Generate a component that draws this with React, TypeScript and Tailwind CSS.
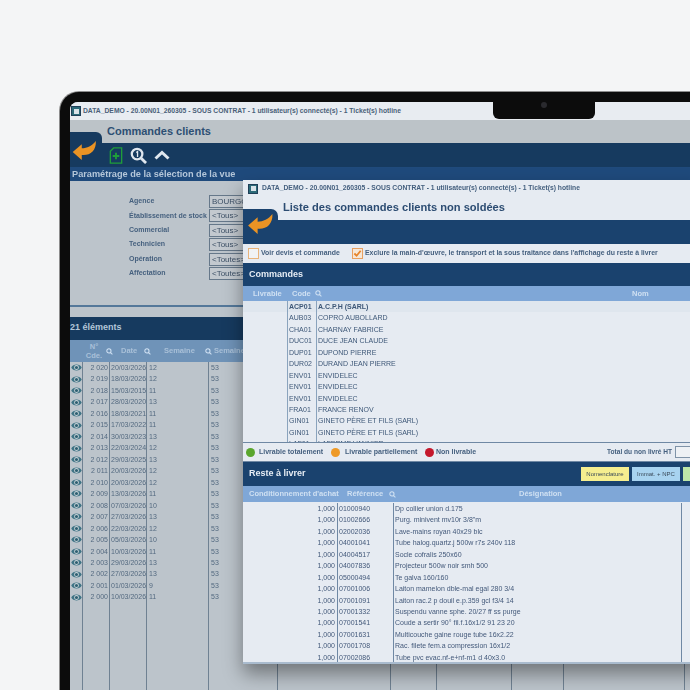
import React from "react";

const orders: [string, string, string][] = [
  ["2 020", "20/03/2026", "12"], ["2 019", "18/03/2026", "12"], ["2 018", "15/03/2015", "11"],
  ["2 017", "28/03/2020", "13"], ["2 016", "18/03/2021", "11"], ["2 015", "17/03/2022", "11"],
  ["2 014", "30/03/2023", "13"], ["2 013", "22/03/2024", "12"], ["2 012", "29/03/2025", "13"],
  ["2 011", "20/03/2026", "12"], ["2 010", "20/03/2026", "12"], ["2 009", "13/03/2026", "11"],
  ["2 008", "07/03/2026", "10"], ["2 007", "27/03/2026", "13"], ["2 006", "22/03/2026", "12"],
  ["2 005", "05/03/2026", "10"], ["2 004", "10/03/2026", "11"], ["2 003", "29/03/2026", "13"],
  ["2 002", "27/03/2026", "13"], ["2 001", "01/03/2026", "9"], ["2 000", "10/03/2026", "11"],
];

const clients: [string, string][] = [
  ["ACP01", "A.C.P.H (SARL)"], ["AUB03", "COPRO AUBOLLARD"], ["CHA01", "CHARNAY FABRICE"],
  ["DUC01", "DUCE JEAN CLAUDE"], ["DUP01", "DUPOND PIERRE"], ["DUR02", "DURAND JEAN PIERRE"],
  ["ENV01", "ENVIDELEC"], ["ENV01", "ENVIDELEC"], ["ENV01", "ENVIDELEC"], ["FRA01", "FRANCE RENOV"],
  ["GIN01", "GINETO PÈRE ET FILS (SARL)"], ["GIN01", "GINETO PÈRE ET FILS (SARL)"], ["LAF01", "LAFERME VANNIER"],
];

const items: [string, string][] = [
  ["01000940", "Dp collier union d.175"], ["01002666", "Purg. minivent mv10r 3/8\"m"],
  ["02002036", "Lave-mains royan 40x29 blc"], ["04001041", "Tube halog.quartz.j 500w r7s 240v 118"],
  ["04004517", "Socle cofralis 250x60"], ["04007836", "Projecteur 500w noir smh 500"],
  ["05000494", "Te galva 160/160"], ["07001006", "Laiton mamelon dble-mal egal 280 3/4"],
  ["07001091", "Laiton rac.2 p douil e.p.359 gcl f3/4 14"], ["07001332", "Suspendu vanne sphe. 20/27 ff ss purge"],
  ["07001541", "Coude a sertir 90° fil.f.16x1/2 91 23 20"], ["07001631", "Multicouche gaine rouge tube 16x2.22"],
  ["07001708", "Rac. filete fem.a compression  16x1/2"], ["07002086", "Tube pvc evac.nf-e+nf-m1 d 40x3.0"],
];

const filters: [string, string][] = [
  ["Agence", "BOURGOGNE"], ["Établissement de stock", "<Tous>"], ["Commercial", "<Tous>"],
  ["Technicien", "<Tous>"], ["Opération", "<Toutes>"], ["Affectation", "<Toutes>"],
];

function BackArrow({ className }: { className: string }) {
  return (
    <svg viewBox="0 0 26 22" className={className}>
      <path d="M0 12 L10 3.5 L10 8 C16 8 21 5.5 25.5 0 C26 10 20 15.5 12 15.5 L10 15.5 L10 21 Z" fill="#ea9324" />
    </svg>
  );
}

function SearchIcon({ color = "#cfe0f2" }: { color?: string }) {
  return (
    <svg viewBox="0 0 12 12" className="w-[7px] h-[7px] shrink-0" fill="none" stroke={color} strokeWidth="1.8">
      <circle cx="5" cy="5" r="3.6" />
      <path d="M7.8 7.8 L11 11" />
    </svg>
  );
}

function Eye() {
  return (
    <svg viewBox="0 0 20 16" className="w-[11px] h-[9px]">
      <path d="M0.5 8 C3 1 17 1 19.5 8 C17 15 3 15 0.5 8 Z" fill="#3f7486" />
      <circle cx="10" cy="8" r="4.4" fill="#c9d3d8" />
      <circle cx="10" cy="8" r="2.8" fill="#2f6072" />
    </svg>
  );
}

function WinIcon() {
  return (
    <div className="w-[10px] h-[10px] bg-[#2c6a78] border border-[#1f3f58] flex items-center justify-center shrink-0">
      <div className="w-[5px] h-[5px] bg-[#d8e2e8]" />
    </div>
  );
}

function Column({ width, children, last }: { width: string; children?: React.ReactNode; last?: boolean }) {
  return (
    <div className={`${width} shrink-0 h-full overflow-hidden ${last ? "" : "border-r border-[#6f8192]"}`}>{children}</div>
  );
}

function BaseApp() {
  return (
    <div className="w-[620px] h-[588px] flex flex-col overflow-hidden bg-[#bcc4cb] text-[#55687c]">
      <div className="h-[18px] shrink-0 bg-[#e8ecf1] flex items-center pl-[1px] gap-[2px] text-[6.75px] font-bold text-[#4a5f78] whitespace-nowrap">
        <WinIcon />
        <span>DATA_DEMO - 20.00N01_260305 - SOUS CONTRAT - 1 utilisateur(s) connecté(s) - 1 Ticket(s) hotline</span>
      </div>
      <div className="h-[23px] shrink-0 bg-[#bcc3c8] flex">
        <div className="w-[32px] mt-[12px] h-[11px] bg-[#163a5f] rounded-tr-[6px]" />
        <div className="pl-[5px] pt-[3px] text-[11px] font-bold text-[#2d4f73]">Commandes clients</div>
      </div>
      <div className="h-[24px] shrink-0 bg-[#163a5f] flex items-center">
        <div className="w-[38px] pl-[2px]">
          <BackArrow className="w-[25px] h-[20px] -mt-[8px]" />
        </div>
        <svg viewBox="0 0 14 18" className="w-[14px] h-[17px] ml-[1px]" fill="none" stroke="#1f9d3a" strokeWidth="1.4">
          <path d="M1 4.5 L4.5 1 H13 V17 H1 Z" />
          <path d="M7 6 V13 M3.5 9.5 H10.5" strokeWidth="2" />
        </svg>
        <svg viewBox="0 0 18 18" className="w-[17px] h-[17px] ml-[7px]" fill="none" stroke="#dfe6ee" strokeWidth="2.4">
          <circle cx="7.5" cy="7.5" r="5.6" />
          <path d="M11.8 11.8 L17 17" strokeWidth="3" />
          <path d="M6.6 5.8 L8 4.8 V10.5" strokeWidth="1.4" />
        </svg>
        <svg viewBox="0 0 16 10" className="w-[16px] h-[10px] ml-[7px]" fill="none" stroke="#dfe6ee" strokeWidth="3">
          <path d="M1.5 8.5 L8 2.5 L14.5 8.5" />
        </svg>
      </div>
      <div className="h-[14px] shrink-0 bg-[#1f4a7c] pl-[2px] text-[9.2px] font-bold leading-[14px] text-[#b4c6d9] whitespace-nowrap">
        Paramétrage de la sélection de la vue
      </div>
      <div className="h-[126px] shrink-0 pt-[14px] pl-[59px] border-b-2 border-[#54789a] flex flex-col gap-[1.4px]">
        {filters.map(([label, value]) => (
          <div key={label} className="h-[13px] flex items-center">
            <div className="w-[80px] text-[7px] font-bold text-[#46617f] whitespace-nowrap">{label}</div>
            <div className="w-[60px] h-[13px] border border-[#66788a] bg-[#c3c9cf] pl-[2px] text-[8px] leading-[11px] text-[#3d5066] overflow-hidden whitespace-nowrap">
              {value}
            </div>
          </div>
        ))}
      </div>
      <div className="h-[10px] shrink-0" />
      <div className="h-[23px] shrink-0 bg-[#163a5f] text-[9px] font-bold leading-[21px] text-[#b4c6d9]">21 éléments</div>
      <div className="h-[22px] shrink-0 bg-[#6f93b8] flex items-center text-[7.5px] font-bold text-[#a9c0d8] whitespace-nowrap">
        <div className="w-[14px]" />
        <div className="w-[20px] text-center leading-[9px]">N°<br />Cde.</div>
        <div className="ml-[2px]"><SearchIcon /></div>
        <div className="ml-[8px] w-[16px]">Date</div>
        <div className="ml-[7px]"><SearchIcon /></div>
        <div className="ml-[13px] w-[28px]">Semaine</div>
        <div className="ml-[13px]"><SearchIcon /></div>
        <div className="ml-[2px]">Semaine</div>
      </div>
      <div className="flex-1 flex text-[7px] leading-[11.47px] text-[#546a80] min-h-0 whitespace-nowrap">
        <Column width="w-[13px]">
          {orders.map((o) => (
            <div key={o[0]} className="h-[11.47px] flex items-center justify-center"><Eye /></div>
          ))}
        </Column>
        <Column width="w-[27px]">
          {orders.map((o) => (<div key={o[0]} className="h-[11.47px] text-right pr-[1px]">{o[0]}</div>))}
        </Column>
        <Column width="w-[37px]">
          <div className="pl-[1px]">
            {orders.map((o) => (<div key={o[0]} className="h-[11.47px]">{o[1]}</div>))}
          </div>
        </Column>
        <Column width="w-[62px]">
          <div className="pl-[2px]">
            {orders.map((o) => (<div key={o[0]} className="h-[11.47px]">{o[2]}</div>))}
          </div>
        </Column>
        <Column width="w-[69px]">
          <div className="pl-[2px]">
            {orders.map((o) => (<div key={o[0]} className="h-[11.47px]">53</div>))}
          </div>
        </Column>
        <Column width="w-[113px]" />
        <Column width="w-[46px]" />
        <Column width="w-[75px]" />
        <Column width="w-[52px]" />
        <Column width="w-[121px]" />
        <Column width="w-[6px]" last />
      </div>
    </div>
  );
}

function Window() {
  return (
    <div className="absolute left-[243px] top-[180px] w-[460px] h-[484px] flex flex-col bg-[#e6ebf2] border-b-2 border-[#a9bbce] shadow-[0_10px_18px_rgba(0,0,0,0.4)] overflow-hidden text-[#3e5878] whitespace-nowrap blur-[0.35px]">
      <div className="h-[16px] shrink-0 flex items-center gap-[4px] pl-[5px] pt-[1px] text-[6.75px] font-bold text-[#45607f]">
        <WinIcon />
        <span>DATA_DEMO - 20.00N01_260305 - SOUS CONTRAT - 1 utilisateur(s) connecté(s) - 1 Ticket(s) hotline</span>
      </div>
      <div className="h-[24px] shrink-0 flex">
        <div className="w-[35px] mt-[13px] h-[11px] bg-[#1a426e] rounded-tr-[7px]" />
        <div className="pl-[5px] text-[11.1px] font-bold leading-[22px] text-[#2c4c72]">Liste des commandes clients non soldées</div>
      </div>
      <div className="h-[24px] shrink-0 bg-[#1a426e] pl-[5px]">
        <BackArrow className="w-[25px] h-[21px] -mt-[6px]" />
      </div>
      <div className="h-[19px] shrink-0 flex items-center pl-[5px] text-[6.9px] font-bold text-[#45607f]">
        <div className="w-[11px] h-[11px] border border-[#e8b47c] bg-[#f1f3f5] shrink-0" />
        <span className="ml-[2px] w-[91px] shrink-0">Voir devis et commande</span>
        <div className="w-[11px] h-[11px] border border-[#e8a060] bg-[#f6e8d8] shrink-0 flex items-center justify-center">
          <svg viewBox="0 0 10 10" className="w-[9px] h-[9px]" fill="none" stroke="#e8842a" strokeWidth="2">
            <path d="M1.5 5 L4 7.5 L8.5 2" />
          </svg>
        </div>
        <span className="ml-[2px]">Exclure la main-d'œuvre, le transport et la sous traitance dans l'affichage du reste à livrer</span>
      </div>
      <div className="h-[23px] shrink-0 bg-[#1a426e] pl-[6px] text-[9px] font-bold leading-[22px] text-[#e6ecf4]">Commandes</div>
      <div className="h-[15px] shrink-0 bg-[#7fa7d7] flex items-center text-[7.5px] font-bold text-[#cfe0f2]">
        <span className="ml-[10px] w-[39px] shrink-0">Livrable</span>
        <span className="w-[23px] shrink-0">Code</span>
        <SearchIcon />
        <span className="ml-[310px]">Nom</span>
      </div>
      <div className="h-[141px] shrink-0 overflow-hidden flex text-[7px] leading-[11.45px] text-[#3e5878]">
        <div className="w-[45px] shrink-0 border-r border-[#8aa3bd]">
          <div className="h-[11px] bg-[#dfe6ee]" />
        </div>
        <div className="w-[29px] shrink-0 border-r border-[#8aa3bd]">
          {clients.map(([c], i) => (
            <div key={i} className={`h-[11.45px] pl-[1px] ${i === 0 ? "bg-[#dfe6ee] font-bold" : ""}`}>{c}</div>
          ))}
        </div>
        <div className="flex-1">
          {clients.map(([, n], i) => (
            <div key={i} className={`h-[11.45px] pl-[1px] ${i === 0 ? "bg-[#dfe6ee] font-bold" : ""}`}>{n}</div>
          ))}
        </div>
      </div>
      <div className="h-[20px] shrink-0 border-y border-[#6f88a4] flex items-center pl-[3px] text-[7px] font-bold text-[#45607f]">
        <div className="w-[9px] h-[9px] rounded-full bg-[#5aa62e] shrink-0" />
        <span className="ml-[4px] w-[72px] shrink-0">Livrable totalement</span>
        <div className="w-[9px] h-[9px] rounded-full bg-[#ee9a28] shrink-0" />
        <span className="ml-[5px] w-[80px] shrink-0">Livrable partiellement</span>
        <div className="w-[9px] h-[9px] rounded-full bg-[#c4182c] shrink-0" />
        <span className="ml-[2px] w-[171px] shrink-0">Non livrable</span>
        <span className="text-[6.6px] w-[65px] shrink-0">Total du non livré HT</span>
        <div className="ml-[3px] w-[30px] h-[12px] border border-[#7f93a8] bg-[#eef1f5] shrink-0" />
      </div>
      <div className="h-[24px] shrink-0 bg-[#1a426e] flex items-center pl-[6px] text-[9px] font-bold text-[#e6ecf4]">
        <span className="w-[332px] shrink-0">Reste à livrer</span>
        <div className="w-[48px] h-[14px] shrink-0 bg-[#f5ee8f] text-[6px] font-normal leading-[14px] text-center text-[#3a4a5a]">Nomenclature</div>
        <div className="ml-[3px] w-[48px] h-[14px] shrink-0 bg-[#a8d3f0] text-[6px] font-normal leading-[14px] text-center text-[#3a4a5a]">Immat. + NPC</div>
        <div className="ml-[3px] w-[48px] h-[14px] shrink-0 bg-[#bde6a8]" />
      </div>
      <div className="h-[16px] shrink-0 bg-[#7fa7d7] flex items-center text-[7.5px] font-bold text-[#cfe0f2]">
        <span className="ml-[6px] w-[98px] shrink-0">Conditionnement d'achat</span>
        <span className="w-[42px] shrink-0">Référence</span>
        <SearchIcon />
        <span className="ml-[123px]">Désignation</span>
      </div>
      <div className="flex-1 min-h-0 flex text-[7px] leading-[11.45px] text-[#43597a] pt-[1px]">
        <div className="w-[95px] shrink-0 border-r border-[#6f88a4]">
          {items.map(([r]) => (<div key={r} className="h-[11.45px] text-right pr-[2px]">1,000</div>))}
        </div>
        <div className="w-[56px] shrink-0 border-r border-[#6f88a4]">
          {items.map(([r]) => (<div key={r} className="h-[11.45px] pl-[1px]">{r}</div>))}
        </div>
        <div className="w-[288px] shrink-0 border-r border-[#6f88a4]">
          {items.map(([r, d]) => (<div key={r} className="h-[11.45px] pl-[1px]">{d}</div>))}
        </div>
      </div>
    </div>
  );
}

export default function App() {
  return (
    <div className="relative w-[690px] h-[690px] overflow-hidden bg-[#f4f5f6] [font-family:'Liberation_Sans',Arial,sans-serif]">
      <div className="pt-[91px] pl-[59px] w-[800px]">
        <div className="rounded-tl-[20px] bg-[#8d8d8d] pt-[1px] pl-[1px]">
          <div className="rounded-tl-[19px] bg-[#0c0c0c] pt-[10px] pl-[10px] overflow-hidden">
            <div className="rounded-tl-[8px] overflow-hidden w-[620px] blur-[0.35px]">
              <BaseApp />
            </div>
          </div>
        </div>
      </div>
      <div className="absolute left-[493px] top-[100px] w-[102px] h-[19px] bg-[#0c0c0c] rounded-b-[6px] flex justify-center pt-[2px]">
        <div className="w-[6px] h-[6px] rounded-full bg-[#2a2a2e]" />
      </div>
      <Window />
    </div>
  );
}
